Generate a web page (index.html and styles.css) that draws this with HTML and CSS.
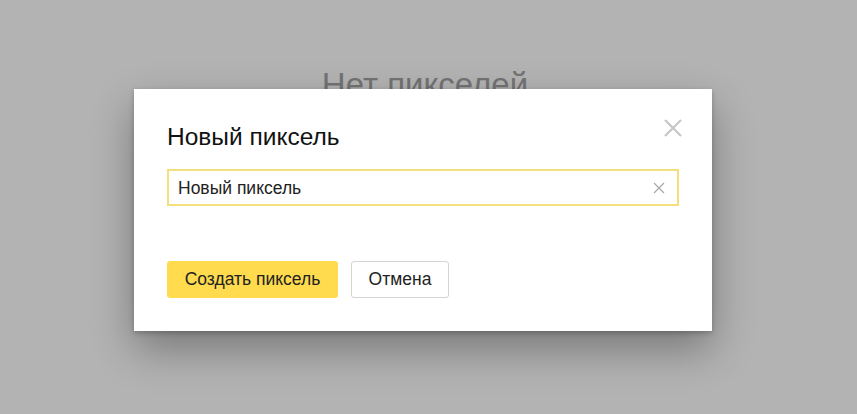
FILE: index.html
```html
<!DOCTYPE html>
<html lang="ru">
<head>
<meta charset="utf-8">
<link rel="stylesheet" href="styles.css">
</head>
<body>
<div class="page">
  <div class="empty">Нет пикселей</div>
</div>
<div class="overlay">
  <div class="modal">
    <button class="close" aria-label="Закрыть">
      <svg width="18" height="18" viewBox="0 0 18 18"><path d="M1 1L17 17M17 1L1 17" stroke="#c4c4c4" stroke-width="2"/></svg>
    </button>
    <h2 class="title">Новый пиксель</h2>
    <div class="field">
      <span class="value">Новый пиксель</span>
      <svg class="clear" width="12" height="12" viewBox="0 0 12 12"><path d="M1 1L11 11M11 1L1 11" stroke="#a8a8a8" stroke-width="1.2"/></svg>
    </div>
    <div class="actions">
      <button class="btn btn-primary">Создать пиксель</button>
      <button class="btn btn-default">Отмена</button>
    </div>
  </div>
</div>
</body>
</html>
```

FILE: styles.css
```css
html, body {
  margin: 0;
  padding: 0;
  height: 100%;
}
body {
  background: #b3b3b3;
  font-family: "Liberation Sans", Arial, sans-serif;
  overflow: hidden;
  position: relative;
}
.page {
  display: flex;
  justify-content: center;
  padding-top: 66px;
}
.empty {
  font-size: 33px;
  color: #737373;
  margin-left: -7px;
}
.overlay {
  position: absolute;
  inset: 0;
}
.modal {
  position: absolute;
  left: 134px;
  top: 89px;
  width: 578px;
  height: 242px;
  box-sizing: border-box;
  background: #fff;
  padding: 33px 33px 0 33px;
  box-shadow: 0 18px 40px rgba(0,0,0,0.33), 0 2px 5px rgba(0,0,0,0.22);
}
.close {
  position: absolute;
  right: 30px;
  top: 30px;
  width: 18px;
  height: 18px;
  padding: 0;
  border: 0;
  background: none;
  display: flex;
}
.title {
  margin: 0;
  font-weight: normal;
  font-size: 24.5px;
  line-height: 30px;
  color: #111;
  height: 30px;
}
.field {
  margin-top: 17px;
  height: 37px;
  box-sizing: border-box;
  border: 2px solid #f3df7c;
  display: flex;
  align-items: center;
  padding: 0 12px 0 9px;
}
.value {
  flex: 1;
  font-size: 17.5px;
  color: #222;
  padding-top: 2px;
}
.clear {
  display: block;
}
.actions {
  margin-top: 55px;
  display: flex;
  gap: 13px;
}
.btn {
  height: 37px;
  box-sizing: border-box;
  border-radius: 3px;
  font-family: "Liberation Sans", Arial, sans-serif;
  font-size: 17.5px;
  color: #222;
  padding: 0;
  cursor: pointer;
}
.btn-primary {
  background: #ffdb4d;
  border: 0;
  width: 171px;
}
.btn-default {
  background: #fff;
  border: 1px solid #d4d4d4;
  width: 98px;
}
```
